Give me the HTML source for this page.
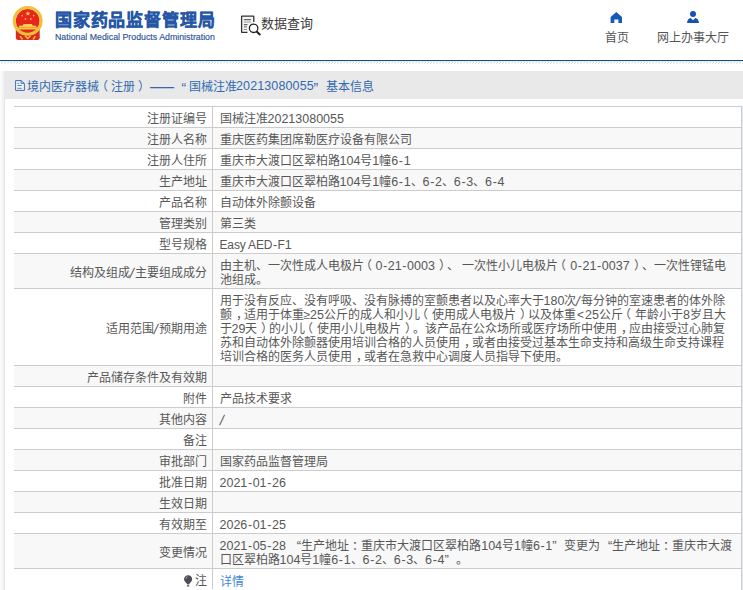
<!DOCTYPE html>
<html lang="zh-CN">
<head>
<meta charset="utf-8">
<style>
*{box-sizing:border-box;}
html,body{margin:0;padding:0;}
body{text-spacing-trim:space-all;width:743px;height:590px;overflow:hidden;background:#fff;position:relative;font-family:"Liberation Sans",sans-serif;color:#444;}
.abs{position:absolute;}
#title{left:55px;top:8.8px;font-size:17px;letter-spacing:0.82px;font-weight:bold;color:#2657a6;-webkit-text-stroke:0.35px #2657a6;white-space:nowrap;line-height:24px;}
#sub{left:55px;top:30.5px;font-size:8.8px;color:#2a5496;-webkit-text-stroke:0.15px #2a5496;white-space:nowrap;line-height:12px;}
#dq{left:261px;top:13.5px;font-size:13px;color:#3a3a3a;white-space:nowrap;line-height:20px;}
.nav{font-size:12px;color:#555;white-space:nowrap;line-height:16px;}
#bline{left:0;top:60px;width:743px;height:1px;background:#1f4a7c;}
#bhatch{left:0;top:61px;width:743px;height:3px;background:repeating-linear-gradient(90deg,#bfe0f5 0 1px,#fff 1px 3px);}
#bhatch0{left:0;top:61px;width:743px;height:1px;background:#def3fd;}
#boxl{left:4px;top:71px;width:1px;height:519px;background:#e6e6e6;}
#hbar{left:4px;top:71px;width:739px;height:28px;background:#e9e9e9;}
#htext{left:0;top:79px;width:743px;height:16px;font-size:12px;color:#3169b0;white-space:nowrap;line-height:16px;}
#htext span{top:0;}
#htext svg{top:1px!important;}
table{position:absolute;left:14px;top:106px;width:728px;border-collapse:collapse;font-size:12px;color:#575757;}
td{white-space:nowrap;border:1px solid #cccccc;padding:5px 5px 1px;line-height:14px;vertical-align:middle;}
td.l{border-left:0;width:198px;text-align:right;padding-right:5px;}
td.v{padding-left:7px;}
tr:nth-child(even) td{background:#f8f8f8;}
tr:last-child td{border-bottom:0;}
.sl{font-size:14px;padding:0 0.2px;display:inline-block;line-height:12px;transform:skewX(-12deg) translateY(0.5px);}
.dg{font-size:12.5px;}
.hy{font-size:12.5px;padding:0 0.6px;}
.lp{position:relative;left:-4px;}
.rp{position:relative;left:4px;}
.cm{position:relative;left:4px;}
.cl{position:relative;left:2.5px;}
.oq{display:inline-block;width:12px;text-align:right;font-size:13px;line-height:12px;}
.cq{display:inline-block;width:12px;text-align:left;font-size:13px;line-height:12px;}
</style>
</head>
<body>
<!-- emblem -->
<svg class="abs" style="left:0;top:0" width="50" height="45" viewBox="0 0 50 45">
  <path d="M15.8 28.5 L39.6 28.5 L39.8 37.5 Q39.5 40 37.5 40 L18 40 Q16 40 15.8 37.5 Z" fill="#dc2a1e"/>
  <circle cx="27.7" cy="20.9" r="11.9" fill="#e8261c"/>
  <circle cx="27.7" cy="20.9" r="13.4" fill="none" stroke="#f0c03a" stroke-width="3.1"/>
  <path d="M17.2 27.6 L38.2 27.6 L37.4 29.4 L18 29.4 Z" fill="#f2c640"/>
  <path d="M23.5 24 L32 24 L32.5 25.4 L36.2 25.8 L36.6 27.6 L18.8 27.6 L19.2 25.8 L23 25.4 Z" fill="#f6d04c"/>
  <path d="M20 36.2 L22.5 39.5 M35.4 36.2 L33 39.5 M25 35.8 L27.7 38.5 L30.4 35.8" stroke="#f2c640" stroke-width="1.3" fill="none"/>
  <polygon points="27.9,11 28.6,12.7 30.3,12.8 29,13.9 29.4,15.6 27.9,14.7 26.4,15.6 26.8,13.9 25.5,12.8 27.2,12.7" fill="#f5cf55"/>
  <circle cx="22.1" cy="15.6" r="0.95" fill="#f2b24a"/><circle cx="33.7" cy="15.6" r="0.95" fill="#f2b24a"/>
  <circle cx="25.5" cy="19" r="0.95" fill="#f2b24a"/><circle cx="30.8" cy="19" r="0.95" fill="#f2b24a"/>
</svg>
<div id="title" class="abs">国家药品监督管理局</div>
<div id="sub" class="abs">National Medical Products Administration</div>
<!-- data query icon -->
<svg class="abs" style="left:236px;top:12px" width="28" height="26" viewBox="0 0 28 26">
  <path d="M11.5 20.4 H5.7 Q5.6 20.4 5.6 20 V4.6 Q5.6 4.1 6.1 4.1 H17.3 Q17.8 4.1 17.8 4.6 V10" fill="#f4f4f4" stroke="#333" stroke-width="1.3"/>
  <rect x="7.9" y="7.2" width="7" height="1" fill="#444"/>
  <rect x="7.9" y="9.5" width="7" height="1" fill="#999"/>
  <rect x="7.9" y="12.2" width="3.6" height="1" fill="#444"/>
  <rect x="7.9" y="14.4" width="3" height="1" fill="#666"/>
  <rect x="7.9" y="17" width="3" height="1" fill="#888"/>
  <circle cx="17.6" cy="16.3" r="4.2" fill="#fff" stroke="#222" stroke-width="1.3"/>
  <line x1="20.6" y1="19.4" x2="24.3" y2="22.9" stroke="#222" stroke-width="2"/>
</svg>
<div id="dq" class="abs">数据查询</div>
<!-- nav -->
<svg class="abs" style="left:610px;top:11px" width="13" height="13" viewBox="0 0 13 13">
  <path d="M6.3 1 L12 6 L12 12 L8.4 12 L8.4 8.6 L4.3 8.6 L4.3 12 L0.6 12 L0.6 6 Z" fill="#1559b9"/>
</svg>
<div class="abs nav" style="left:604.5px;top:29.5px">首页</div>
<svg class="abs" style="left:686px;top:10px" width="14" height="14" viewBox="0 0 14 14">
  <circle cx="7" cy="4" r="3" fill="#1453b5"/>
  <path d="M1 13 Q1.5 8.6 4.6 8 L7 10.3 L9.4 8 Q12.5 8.6 13 13 Z" fill="#1453b5"/>
</svg>
<div class="abs nav" style="left:656.5px;top:29.5px">网上办事大厅</div>

<div id="bline" class="abs"></div>
<div id="bhatch0" class="abs"></div>
<div class="abs" style="left:0;top:62px;width:743px;height:1px;background:repeating-linear-gradient(90deg,#fff 0 2px,#c3def0 2px 3px);"></div><div class="abs" style="left:0;top:63px;width:743px;height:1px;background:repeating-linear-gradient(90deg,#fff 0 1px,#dbe2e7 1px 2px,#fff 2px 3px);"></div>
<div class="abs" style="left:0;top:71px;width:4px;height:519px;background:linear-gradient(90deg,#fdfdfd,#f0f0f0)"></div>
<div id="boxl" class="abs"></div>
<div class="abs" style="left:741px;top:106px;width:1px;height:484px;background:#cccccc"></div>
<div class="abs" style="left:742px;top:106px;width:1px;height:484px;background:#e6eaee"></div>
<div id="hbar" class="abs"></div>
<div id="htext" class="abs">
<svg class="abs" style="left:15px;top:80px" width="10" height="11" viewBox="0 0 10 11"><path d="M0.6 0.6 H6 L9.4 3.6 V10.4 H0.6 Z" fill="#eef6fc" stroke="#3f6dab" stroke-width="1"/><path d="M6 0.6 V3.4 H9.2" fill="none" stroke="#3f6dab" stroke-width="0.9"/><path d="M2.4 3.4 H4.2 M2.4 5.5 H6.8 M2.4 8.3 H6.8" stroke="#4a78b0" stroke-width="0.9"/></svg>
<span class="abs" style="left:26.5px">境内医疗器械<span style="position:relative;left:-3px">（</span>注册<span style="position:relative;left:3px">）</span></span>
<span class="abs" style="left:150px;font-weight:bold">——</span>
<span class="abs" style="left:181.5px;font-size:14px;top:1px">“</span>
<span class="abs" style="left:188.5px">国械注准</span>
<span class="abs" style="left:236px;top:-0.7px;letter-spacing:0.12px;font-size:12.5px">20213080055</span>
<span class="abs" style="left:313.5px;font-size:14px;top:1px">”</span>
<span class="abs" style="left:325.5px">基本信息</span>
</div>

<table>
<tr><td class="l">注册证编号</td><td class="v">国械注准<span class="dg">20213080055</span></td></tr>
<tr><td class="l">注册人名称</td><td class="v">重庆医药集团席勒医疗设备有限公司</td></tr>
<tr><td class="l">注册人住所</td><td class="v">重庆市大渡口区翠柏路<span class="dg">104</span>号<span class="dg">1</span>幢<span class="dg">6</span><span class="hy">-</span><span class="dg">1</span></td></tr>
<tr><td class="l">生产地址</td><td class="v">重庆市大渡口区翠柏路<span class="dg">104</span>号<span class="dg">1</span>幢<span class="dg">6</span><span class="hy">-</span><span class="dg">1</span>、<span class="dg">6</span><span class="hy">-</span><span class="dg">2</span>、<span class="dg">6</span><span class="hy">-</span><span class="dg">3</span>、<span class="dg">6</span><span class="hy">-</span><span class="dg">4</span></td></tr>
<tr><td class="l">产品名称</td><td class="v">自动体外除颤设备</td></tr>
<tr><td class="l">管理类别</td><td class="v">第三类</td></tr>
<tr><td class="l">型号规格</td><td class="v"><span style="letter-spacing:-0.15px">Easy AED<span class="hy">-</span>F<span class="dg">1</span></span></td></tr>
<tr><td class="l">结构及组成<span class="sl">/</span>主要组成成分</td><td class="v">由主机、一次性成人电极片<span class="lp">（</span><span class="dg">0</span><span class="hy">-</span><span class="dg">21</span><span class="hy">-</span><span class="dg">0003</span><span class="rp">）</span>、 一次性小儿电极片<span class="lp">（</span><span class="dg">0</span><span class="hy">-</span><span class="dg">21</span><span class="hy">-</span><span class="dg">0037</span><span class="rp">）</span>、一次性锂锰电<br>池组成。</td></tr>
<tr><td class="l">适用范围<span class="sl">/</span>预期用途</td><td class="v">用于没有反应、没有呼吸、没有脉搏的室颤患者以及心率大于<span class="dg">180</span>次<span class="sl">/</span>每分钟的室速患者的体外除<br>颤<span class="cm">，</span>适用于体重≥<span class="dg">25</span>公斤的成人和小儿<span class="lp">（</span>使用成人电极片<span class="rp">）</span>以及体重<span style="padding:0 1px">&lt;</span><span class="dg">25</span>公斤<span class="lp">（</span>年龄小于<span class="dg">8</span>岁且大<br>于<span class="dg">29</span>天<span class="rp">）</span>的小儿<span class="lp">（</span>使用小儿电极片<span class="rp">）</span>。该产品在公众场所或医疗场所中使用<span class="cm">，</span>应由接受过心肺复<br>苏和自动体外除颤器使用培训合格的人员使用<span class="cm">，</span>或者由接受过基本生命支持和高级生命支持课程<br>培训合格的医务人员使用<span class="cm">，</span>或者在急救中心调度人员指导下使用。</td></tr>
<tr><td class="l">产品储存条件及有效期</td><td class="v"></td></tr>
<tr><td class="l">附件</td><td class="v">产品技术要求</td></tr>
<tr><td class="l">其他内容</td><td class="v"><span class="sl">/</span></td></tr>
<tr><td class="l">备注</td><td class="v"></td></tr>
<tr><td class="l">审批部门</td><td class="v">国家药品监督管理局</td></tr>
<tr><td class="l">批准日期</td><td class="v"><span class="dg">2021</span><span class="hy">-</span><span class="dg">01</span><span class="hy">-</span><span class="dg">26</span></td></tr>
<tr><td class="l">生效日期</td><td class="v"></td></tr>
<tr><td class="l">有效期至</td><td class="v"><span class="dg">2026</span><span class="hy">-</span><span class="dg">01</span><span class="hy">-</span><span class="dg">25</span></td></tr>
<tr><td class="l">变更情况</td><td class="v"><span class="dg">2021</span><span class="hy">-</span><span class="dg">05</span><span class="hy">-</span><span class="dg">28</span> <span class="oq">“</span>生产地址<span class="cl">：</span>重庆市大渡口区翠柏路<span class="dg">104</span>号<span class="dg">1</span>幢<span class="dg">6</span><span class="hy">-</span><span class="dg">1</span><span class="cq">”</span>变更为<span class="oq">“</span>生产地址<span class="cl">：</span>重庆市大渡<br>口区翠柏路<span class="dg">104</span>号<span class="dg">1</span>幢<span class="dg">6</span><span class="hy">-</span><span class="dg">1</span>、<span class="dg">6</span><span class="hy">-</span><span class="dg">2</span>、<span class="dg">6</span><span class="hy">-</span><span class="dg">3</span>、<span class="dg">6</span><span class="hy">-</span><span class="dg">4</span><span class="cq">”</span>。</td></tr>
<tr><td class="l"><svg width="9" height="12" viewBox="0 0 9 12" style="vertical-align:-2px;margin-right:1.5px"><path d="M4.2 0.3 C1.8 0.3 0 2 0 4.3 C0 6.3 2.4 7.8 3.6 9.6 L4.8 9.6 C6 7.8 8.2 6.3 8.2 4.3 C8.2 2 6.6 0.3 4.2 0.3 Z" fill="#4d4d55"/><path d="M2 3.6 Q2.2 2.2 3.4 1.6" stroke="#d8d8dc" stroke-width="0.8" fill="none"/><rect x="2.9" y="10.2" width="2.4" height="1.3" fill="#555"/></svg>注</td><td class="v"><span style="color:#3f88da;position:relative;top:1px">详情</span></td></tr>
</table>
</body>
</html>
